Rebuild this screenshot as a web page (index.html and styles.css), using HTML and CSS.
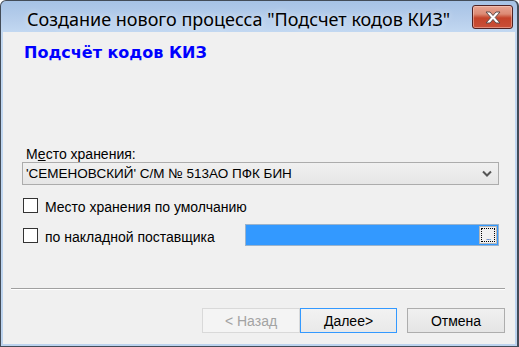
FILE: index.html
```html
<!DOCTYPE html>
<html lang="ru">
<head>
<meta charset="utf-8">
<title>Создание нового процесса</title>
<link rel="stylesheet" href="styles.css">
</head>
<body>
<div class="window">
  <div class="titlebar">
    <span class="title">Создание нового процесса "Подсчет кодов КИЗ"</span>
    <div class="close">
      <svg width="22" height="15" viewBox="0 0 22 15">
        <path d="M4 2 L8 2 L11 5.5 L14 2 L18 2 L13.2 7.5 L18 13 L14 13 L11 9.5 L8 13 L4 13 L8.8 7.5 Z" fill="#fff" stroke="#5c4a4a" stroke-width="1" stroke-linejoin="round"/>
      </svg>
    </div>
  </div>
  <div class="client">
    <div class="heading">Подсчёт кодов КИЗ</div>
    <div class="label">М<u>е</u>сто хранения:</div>
    <div class="combo">
      <span class="combo-text">'СЕМЕНОВСКИЙ' С/М № 513АО ПФК БИН</span>
      <svg class="chevron" width="10" height="7" viewBox="0 0 10 7">
        <polyline points="1,1.5 5,5.5 9,1.5" fill="none" stroke="#555" stroke-width="2"/>
      </svg>
    </div>
    <div class="check row1"><span class="box"></span><span class="check-text">Место хранения по умолчанию</span></div>
    <div class="row2">
      <div class="check"><span class="box"></span><span class="check-text">по накладной поставщика</span></div>
      <div class="field"><div class="browse"><span class="dots">...</span></div></div>
    </div>
    <div class="sep"></div>
    <div class="buttons">
      <div class="btn disabled">&lt; Назад</div>
      <div class="btn default">Далее&gt;</div>
      <div class="btn cancel">Отмена</div>
    </div>
  </div>
</div>
</body>
</html>
```
FILE: styles.css
```css
html, body {
  margin: 0;
  padding: 0;
  background: #fff;
}
.window {
  width: 519px;
  height: 347px;
  box-sizing: border-box;
  border: 1px solid #434c58;
  border-right-width: 2px;
  border-radius: 6px 6px 0 0;
  background: linear-gradient(#a6c2e5 0px, #b8cfec 20px, #c2d8f1 31px, #bcd3ee 100%);
  display: flex;
  flex-direction: column;
  overflow: hidden;
}
.titlebar {
  height: 31px;
  flex: none;
  display: flex;
  align-items: flex-start;
  position: relative;
}
.title {
  font-family: "Noto Sans", "Open Sans", sans-serif;
  font-size: 18px;
  line-height: 24px;
  color: #000;
  padding: 6px 0 0 26px;
  white-space: nowrap;
  text-shadow: 0 0 6px rgba(255,255,255,0.7);
}
.close {
  position: absolute;
  left: 471px;
  top: 4px;
  width: 41px;
  height: 24px;
  box-sizing: border-box;
  border: 1px solid #4f2224;
  border-radius: 3px;
  background: linear-gradient(#e8a593 0px, #dc8a74 8px, #c4432a 12px, #c94f38 22px);
  box-shadow: inset 0 0 0 1px rgba(255,220,210,0.45);
  display: flex;
  align-items: center;
  justify-content: center;
}
.client {
  flex: 1;
  margin: 0 2px 2px 2px;
  background: #f0f0f0;
  font-family: "Liberation Sans", Arial, sans-serif;
  font-size: 14px;
  color: #000;
  display: flex;
  flex-direction: column;
  align-items: flex-start;
}
.heading {
  margin: 12px 0 0 21px;
  font-family: "DejaVu Sans", Verdana, sans-serif;
  font-weight: bold;
  font-size: 16px;
  line-height: 18px;
  color: #0000ff;
}
.label {
  margin: 84px 0 0 23px;
  line-height: 16px;
}
.label u {
  text-decoration-thickness: 1px;
}
.combo {
  margin: 0 0 0 19px;
  width: 477px;
  height: 23px;
  box-sizing: border-box;
  border: 1px solid #acacac;
  background: linear-gradient(#f0f0f0, #e6e6e6);
  display: flex;
  align-items: center;
  justify-content: space-between;
  padding: 0 6px 0 3px;
}
.combo-text {
  font-size: 13.5px;
  line-height: 16px;
  white-space: nowrap;
}
.chevron {
  display: block;
}
.check {
  display: flex;
  align-items: flex-start;
  gap: 7px;
  line-height: 16px;
  white-space: nowrap;
}
.check-text {
  margin-top: 1px;
}
.row1 {
  margin: 13px 0 0 20px;
  height: 15px;
}
.box {
  width: 15px;
  height: 15px;
  box-sizing: border-box;
  border: 1px solid #333;
  background: #fff;
  flex: none;
}
.row2 {
  margin: 11px 0 0 20px;
  height: 22px;
  width: 476px;
  display: flex;
  align-items: center;
  justify-content: space-between;
}
.row2 .check {
  margin-top: 3px;
}
.field {
  width: 254px;
  height: 22px;
  box-sizing: border-box;
  border: 1px solid #9ab3cc;
  background: #3399ff;
  display: flex;
  align-items: center;
  justify-content: flex-end;
  padding-right: 1px;
}
.browse {
  width: 18px;
  height: 18px;
  box-sizing: border-box;
  border: 1px solid #b6b6b6;
  background: #f0f0f0;
  outline: 1px dotted #000;
  outline-offset: -3px;
  display: flex;
  align-items: flex-end;
  justify-content: center;
}
.dots {
  font-size: 9px;
  line-height: 9px;
  color: #1a5fb4;
  letter-spacing: -1px;
  margin-bottom: 1px;
}
.sep {
  margin: 42px 0 0 8px;
  width: 494px;
  height: 1px;
  background: #a0a0a0;
  border-bottom: 1px solid #fff;
}
.buttons {
  margin-top: 18px;
  align-self: stretch;
  display: flex;
  justify-content: flex-end;
  padding-right: 10px;
}
.btn {
  height: 25px;
  box-sizing: border-box;
  border: 1px solid #adadad;
  background: linear-gradient(#f0f0f0, #e5e5e5);
  display: flex;
  align-items: center;
  justify-content: center;
  line-height: 16px;
}
.btn.disabled {
  width: 98px;
  border-color: #d9d9d9;
  background: #f4f4f4;
  color: #a3a3a3;
}
.btn.default {
  width: 97px;
  border-color: #3399ff;
  background: linear-gradient(#f2f2f2, #e9e9e9);
}
.btn.cancel {
  width: 98px;
  margin-left: 10px;
}
```
